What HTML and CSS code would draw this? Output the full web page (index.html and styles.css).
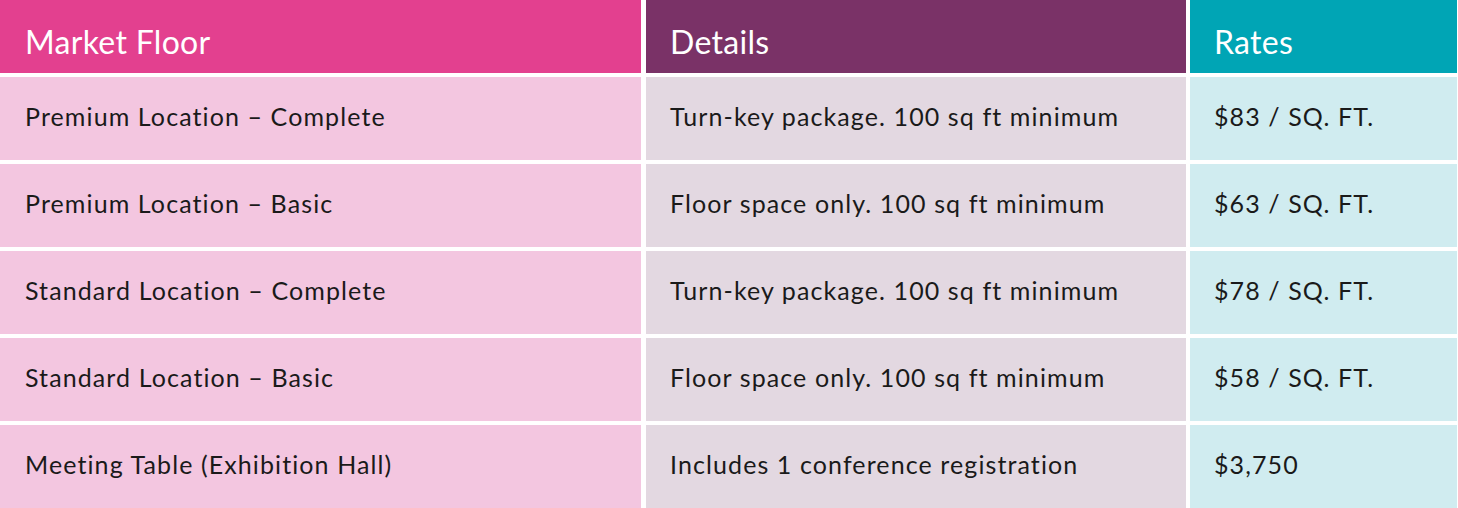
FILE: index.html
```html
<!DOCTYPE html>
<html>
<head>
<meta charset="utf-8">
<link rel="stylesheet" href="styles.css">
</head>
<body>
<div class="rates-table">
  <div class="cell head head-floor">Market Floor</div>
  <div class="cell head head-details">Details</div>
  <div class="cell head head-rates">Rates</div>

  <div class="cell floor">Premium Location – Complete</div>
  <div class="cell details">Turn-key package. 100 sq ft minimum</div>
  <div class="cell rates">$83 / SQ. FT.</div>

  <div class="cell floor">Premium Location – Basic</div>
  <div class="cell details">Floor space only. 100 sq ft minimum</div>
  <div class="cell rates">$63 / SQ. FT.</div>

  <div class="cell floor">Standard Location – Complete</div>
  <div class="cell details">Turn-key package. 100 sq ft minimum</div>
  <div class="cell rates">$78 / SQ. FT.</div>

  <div class="cell floor">Standard Location – Basic</div>
  <div class="cell details">Floor space only. 100 sq ft minimum</div>
  <div class="cell rates">$58 / SQ. FT.</div>

  <div class="cell floor">Meeting Table (Exhibition Hall)</div>
  <div class="cell details">Includes 1 conference registration</div>
  <div class="cell rates">$3,750</div>
</div>
</body>
</html>
```
FILE: styles.css
```css
* { box-sizing: border-box; }
html, body {
  margin: 0;
  padding: 0;
  background: #ffffff;
}
body {
  font-family: "Lato", "Liberation Sans", sans-serif;
  color: #1a1a1a;
}
.rates-table {
  display: grid;
  grid-template-columns: 641px 541px 1fr;
  grid-template-rows: 73px repeat(5, 83px);
  column-gap: 4px;
  row-gap: 4px;
  width: 1458px;
  height: 508px;
  padding-right: 1px;
}
.cell {
  display: flex;
  align-items: center;
  padding-left: 25px;
  padding-bottom: 6px;
  font-size: 25px;
  letter-spacing: 1.1px;
}
.head {
  color: #ffffff;
  font-size: 32px;
  padding-top: 10px;
  padding-bottom: 0;
  letter-spacing: 0.3px;
}
.head-floor { background: #e3408f; }
.head-details { background: #7a3267; padding-left: 24px; margin-left: 1px; }
.head-rates { background: #00a5b5; padding-left: 24px; }
.floor { background: #f3c6e0; }
.details { background: #e3d8e1; padding-left: 24px; margin-left: 1px; }
.rates { background: #d0ecf0; padding-left: 24px; }
```
